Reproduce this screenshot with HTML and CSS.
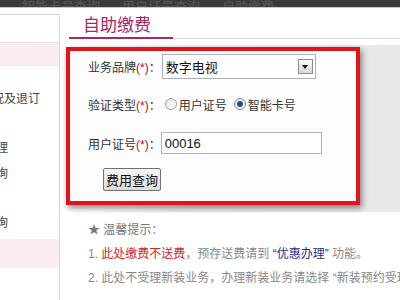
FILE: index.html
```html
<!DOCTYPE html>
<html lang="zh-CN">

<head>
  <meta charset="UTF-8">
  <title>自助缴费</title>
  <link rel="stylesheet" href="styles.css">
</head>

<body>
  <!-- 顶部导航（被截掉大半） -->
  <div class="topbar">
    <span>智能卡号查询</span><span>用户证号查询</span><span>自助缴费</span>
  </div>

  <div class="page">
    <!-- 左侧菜单 -->
    <div class="sidebar">
      <div class="side-head"></div>
      <div class="side-item active"></div>
      <div class="side-item first">开通情况及退订</div>
      <div class="side-item gap">业务办理</div>
      <div class="side-item">余额查询</div>
      <div class="side-item gap">记录查询</div>
      <div class="side-item pink"></div>
    </div>

    <!-- 主体 -->
    <div class="main">
      <div class="title-bar">
        <h2>自助缴费</h2>
      </div>

      <div class="form-area">
        <div class="form-box">
          <div class="row row-brand">
            <span class="label">业务品牌<em>(*)</em>：</span>
            <div class="select">
              <span>数字电视</span>
              <i class="arrow"></i>
            </div>
          </div>
          <div class="row row-type">
            <span class="label">验证类型<em>(*)</em>：</span>
            <span class="radio"></span><span class="radio-text">用户证号</span>
            <span class="radio checked"></span><span class="radio-text">智能卡号</span>
          </div>
          <div class="row row-no">
            <span class="label">用户证号<em>(*)</em>：</span>
            <input type="text" class="text" value="00016">
          </div>
          <div class="row row-btn">
            <input type="button" class="btn" value="费用查询">
          </div>
        </div>
      </div>

      <div class="tips">
        <p class="tips-title">★ 温馨提示：</p>
        <p>1. <span class="red">此处缴费不送费</span>，预存送费请到 <span class="blue">“优惠办理”</span> 功能。</p>
        <p>2. 此处不受理新装业务，办理新装业务请选择 “新装预约受理” 功能。</p>
      </div>
    </div>
  </div>
</body>

</html>
```

FILE: styles.css
```css
body {
  margin: 0;
  padding: 0;
  background-color: #fff;
  font-family: "Liberation Sans", "Noto Sans CJK SC", sans-serif;
  font-size: 12px;
  color: #333;
  overflow: hidden;
}

p {
  margin: 0;
}

/* 顶部 */
.topbar {
  height: 7px;
  overflow: hidden;
  background-color: #3b3b3b;
  border-bottom: 1px solid #eab9cc;
  white-space: nowrap;
}

.topbar span {
  display: inline-block;
  margin: -10px 0 0 22px;
  line-height: 14px;
  font-size: 13px;
  color: #575757;
}

.page {
  display: flex;
  padding-top: 6px;
}

/* 左侧菜单 */
.sidebar {
  width: 59px;
  height: 300px;
  flex-shrink: 0;
  border-top: 1px solid #d6d6d6;
  border-right: 1px solid #d6d6d6;
  overflow: hidden;
  white-space: nowrap;
}

.side-head {
  height: 27px;
  border-bottom: 1px solid #e2e2e2;
}

.side-item {
  height: 26px;
  line-height: 26px;
  margin-left: -40px;
  font-size: 12px;
  color: #444;
}

.side-item.first {
  margin-left: -44px;
  margin-top: 20px;
}

.side-item.active {
  height: 22px;
  margin-left: 0;
  background-color: #fcebf0;
  border-bottom: 1px solid #eee;
}

.side-item.gap {
  margin-top: 23px;
}

.side-item.pink {
  height: 29px;
  margin-top: 3px;
  margin-left: 0;
  background-color: #fcebf0;
}

/* 主体 */
.main {
  flex: 1;
  min-width: 0;
}

.title-bar {
  margin-left: 9px;
  border-bottom: 1px solid #d8d8d8;
}

.title-bar h2 {
  width: 90px;
  margin: 0 0 -1px 0;
  padding-left: 14px;
  font-size: 17px;
  font-weight: normal;
  line-height: 23px;
  color: #a8285f;
  border-bottom: 2px solid #a8285f;
}

.form-area {
  margin-top: 6px;
  padding: 2px 0 7px 6px;
  background: linear-gradient(to right, #fff, #ececec 40%, #e8e8e8);
}

.form-box {
  width: 286px;
  padding: 3px 0 10px 0;
  border: 4px solid #e3131b;
  background-color: #fdfdfd;
  box-shadow: 2px 3px 6px rgba(0, 0, 0, 0.45);
}

.row {
  display: flex;
  align-items: center;
  padding-left: 18px;
}

.label {
  font-size: 12px;
  color: #333;
  white-space: nowrap;
}

.label em {
  font-style: normal;
  color: #b8101a;
}

.row-brand {
  height: 25px;
}

.row-type {
  height: 20px;
  margin-top: 15px;
}

.row-no {
  height: 22px;
  margin-top: 18px;
}

.row-btn {
  margin-top: 14px;
  padding-left: 33px;
}

/* 下拉框 */
.select {
  display: flex;
  align-items: center;
  justify-content: space-between;
  width: 152px;
  height: 23px;
  margin-left: 1px;
  border: 1px solid #a9b0b8;
  background-color: #fff;
  font-size: 13px;
  color: #111;
}

.select span {
  padding-left: 3px;
}

.select .arrow {
  position: relative;
  width: 13px;
  height: 13px;
  margin-right: 2px;
  border: 1px solid #8c8c8c;
  background: linear-gradient(#fafafa, #d8d8d8);
}

.select .arrow::after {
  content: "";
  position: absolute;
  left: 3px;
  top: 5px;
  border-left: 3.5px solid transparent;
  border-right: 3.5px solid transparent;
  border-top: 4px solid #111;
}

/* 单选 */
.radio {
  position: relative;
  width: 10px;
  height: 10px;
  margin-left: 4px;
  border: 1px solid #9aa4ae;
  border-radius: 50%;
  background: linear-gradient(135deg, #e4e4e4, #fff);
}

.radio.checked {
  margin-left: 7px;
  border-color: #6f8fa8;
}

.radio.checked::after {
  content: "";
  position: absolute;
  left: 2px;
  top: 2px;
  width: 6px;
  height: 6px;
  border-radius: 50%;
  background-color: #234f78;
}

.radio-text {
  margin-left: 2px;
  font-size: 12px;
  color: #333;
}

/* 输入框和按钮 */
.text {
  box-sizing: border-box;
  width: 161px;
  height: 22px;
  margin: 0;
  padding: 0 3px;
  border: 1px solid #a9b4bd;
  font-family: "Liberation Sans", sans-serif;
  font-size: 13px;
  color: #111;
  outline: none;
}

.btn {
  width: 58px;
  height: 23px;
  margin: 0;
  padding: 0;
  border: 1px solid #707070;
  border-radius: 2px;
  background: linear-gradient(#f7f7f7, #dcdcdc);
  font-family: "Noto Sans CJK SC", sans-serif;
  font-size: 13px;
  color: #111;
}

/* 提示 */
.tips {
  padding: 6px 0 0 28px;
  line-height: 24px;
  font-size: 12px;
  color: #888;
  white-space: nowrap;
}

.tips-title {
  color: #777;
}

.tips .red {
  color: #d52620;
}

.tips .blue {
  color: #1c2f8c;
}
```
